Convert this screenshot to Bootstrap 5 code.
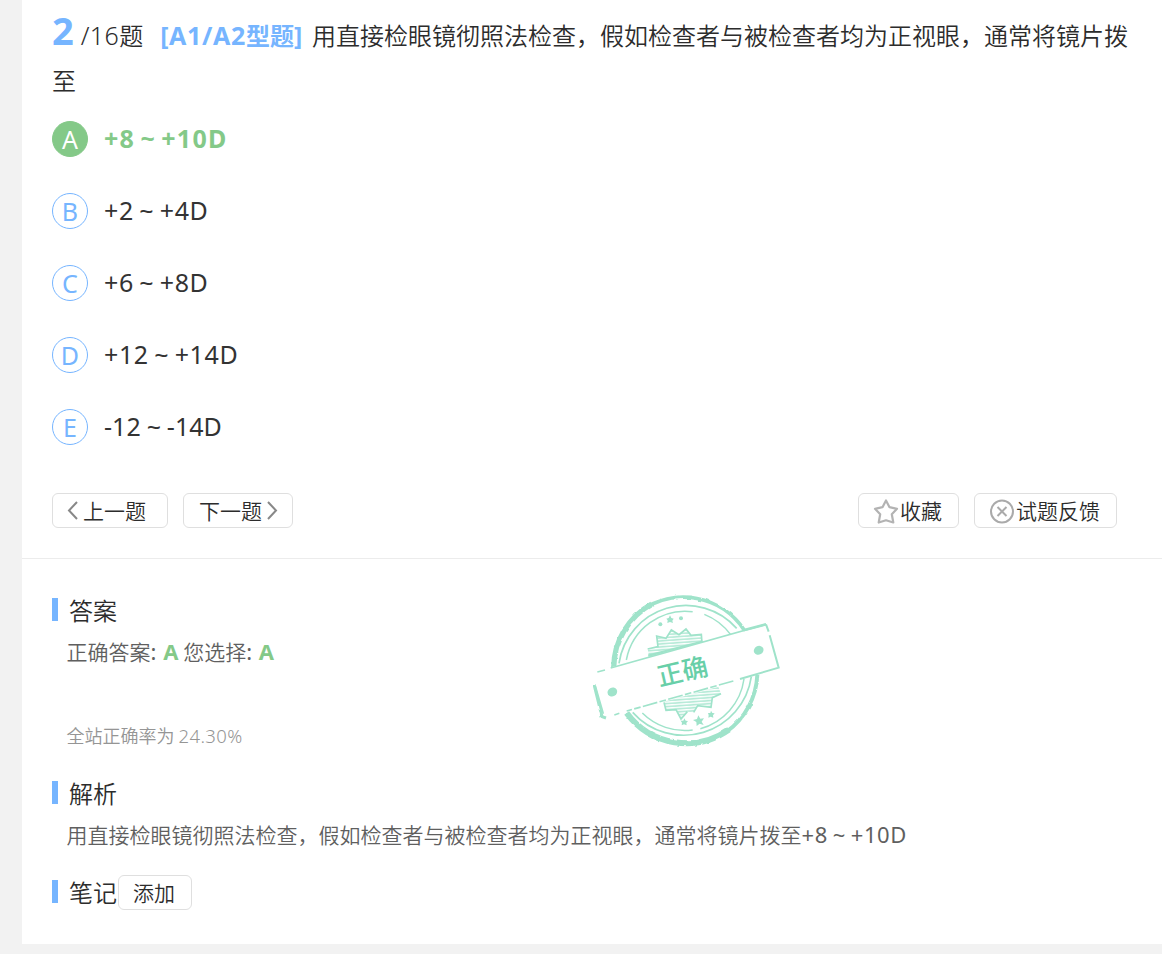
<!DOCTYPE html>
<html lang="zh-CN">
<head>
<meta charset="utf-8">
<meta name="viewport" content="width=device-width, initial-scale=1">
<title>题目解析</title>
<link href="https://cdn.jsdelivr.net/npm/bootstrap@5.3.0/dist/css/bootstrap.min.css" rel="stylesheet">
<style>
body{background:#f2f2f2;color:#2c2c2c;font-family:"Noto Sans CJK SC",sans-serif;font-weight:350}
.sheet{margin-left:22px;height:944px;background:#fff}
.latin{font-family:"Noto Sans",sans-serif;font-weight:350;font-size:25px;letter-spacing:.4px;line-height:1}
.question{height:121px;padding:13px 30px 0;font-size:24px;line-height:44.5px}
.number{font-family:"Noto Sans",sans-serif;font-size:38px;line-height:30px;color:#76b5ff;font-weight:700;margin-right:7px}
.kind{color:#76b5ff;font-weight:700;margin:0 9px 0 17px}
.kind .latin{font-weight:700;letter-spacing:.65px}
.choice{height:36px;margin-bottom:36px;padding-left:30px;font-family:"Noto Sans",sans-serif;font-weight:400;font-size:25px;letter-spacing:.6px;line-height:34px;color:#333}
.minus{letter-spacing:.05px}
.letter{width:36px;height:36px;border:1px solid #76b5ff;border-radius:50%;color:#76b5ff;margin-right:16px;letter-spacing:0;font-size:25px;line-height:34px;font-weight:400}
.tilde{display:inline-block;width:26px;text-align:center}
.correct{color:#84c988;font-weight:700;letter-spacing:1.3px}
.correct .letter{background:#84c988;border-color:#84c988;color:#fff}
.tool{height:35px;border:1px solid #dfdfdf;border-radius:6px;background:#fff;color:#2c2c2c;font-size:21px;font-weight:350;line-height:33px;padding:0 16px 0 14px;white-space:nowrap}
.tool svg{fill:none;flex:none}
.prev{padding-right:21px}
.next{padding-left:15px;padding-right:14px}
.tools{gap:15px;padding:12px 45px 30px 30px}
.results{border-top:1px solid #ececec;padding:33px 0 0 30px}
.heading{height:35px;font-size:24px;line-height:33px}
.heading::before{content:"";width:6px;height:23px;background:#76b5ff;margin-right:11px}
.note{margin-top:24px}
.note .tool{margin:2px 0 0 1px;padding:0 16px 0 14px}
.detail{padding-left:14.5px;font-size:21px;line-height:32px;height:32px;margin:8px 0 1px;color:#5f5f5f}
.detail .latin{font-size:22px;font-weight:400;letter-spacing:.55px}
.detail b{color:#84c988;font:700 22px/1 "Noto Sans",sans-serif}
.detail .tilde{width:23px}
.rate{padding-left:14.5px;font-size:18px;line-height:28px;height:28px;color:#959595;margin:54px 0 26px}
.rate .latin{font-size:18.5px;letter-spacing:.4px}
.stamp{left:558px;top:26px}
</style>
</head>
<body>
<main class="sheet">
  <div class="question"><span class="number">2</span><span class="latin">/16</span>题<span class="kind"><span class="latin">[A1/A2</span>型题<span class="latin">]</span></span>用直接检眼镜彻照法检查，假如检查者与被检查者均为正视眼，通常将镜片拨至</div>

  <div class="choice correct d-flex"><span class="letter d-flex justify-content-center">A</span><span>+8<span class="tilde">~</span>+10D</span></div>
  <div class="choice d-flex"><span class="letter d-flex justify-content-center">B</span><span>+2<span class="tilde">~</span>+4D</span></div>
  <div class="choice d-flex"><span class="letter d-flex justify-content-center">C</span><span>+6<span class="tilde">~</span>+8D</span></div>
  <div class="choice d-flex"><span class="letter d-flex justify-content-center">D</span><span>+12<span class="tilde">~</span>+14D</span></div>
  <div class="choice d-flex"><span class="letter d-flex justify-content-center">E</span><span class="minus">-12<span class="tilde">~</span>-14D</span></div>

  <div class="tools d-flex">
    <button class="tool prev d-flex align-items-center"><svg width="16" height="20" stroke="#888" stroke-width="2"><path d="M10 1 2 9.5 10 18"/></svg>上一题</button>
    <button class="tool next d-flex align-items-center">下一题<svg width="16" height="20" stroke="#888" stroke-width="2"><path d="M6 1 14 9.5 6 18"/></svg></button>
    <button class="tool d-flex align-items-center ms-auto"><svg width="27" height="26" stroke="#b3b3b3" stroke-width="2.2" stroke-linejoin="round"><path d="M13 2.5 16.5 9.2 24 10.8 18.8 16.3 20.3 24.5 13 22.3 5.7 24.5 7.2 16.3 2 10.8 9.5 9.2Z"/></svg>收藏</button>
    <button class="tool d-flex align-items-center"><svg width="27" height="26" stroke="#aaa" stroke-width="2"><circle cx="13" cy="13.5" r="11"/><path d="m8.5 9 9 9m0-9-9 9"/></svg>试题反馈</button>
  </div>

  <section class="results position-relative">
    <div class="heading d-flex align-items-center">答案</div>
    <div class="detail">正确答案<span class="latin">: </span><b>A</b> 您选择<span class="latin">: </span><b>A</b></div>
    <div class="rate">全站正确率为 <span class="latin">24.30%</span></div>
    <div class="heading d-flex align-items-center">解析</div>
    <div class="detail">用直接检眼镜彻照法检查，假如检查者与被检查者均为正视眼，通常将镜片拨至<span class="latin">+8<span class="tilde">~</span>+10D</span></div>
    <div class="heading note d-flex align-items-center">笔记<button class="tool">添加</button></div>

    <svg class="stamp position-absolute" width="210" height="170" viewBox="0 0 630 510" fill="none" stroke="#9fe3ca">
      <defs>
        <filter id="worn" x="-5%" y="-5%" width="110%" height="110%"><feTurbulence type="fractalNoise" baseFrequency=".04" numOctaves="2" seed="4"/><feDisplacementMap in="SourceGraphic" scale="8" xChannelSelector="R" yChannelSelector="G"/></filter>
        <pattern id="lines" width="9" height="9" patternUnits="userSpaceOnUse" patternTransform="rotate(-4)"><path d="M0 4h9" stroke-width="5" stroke="#b5ead7"/></pattern>
      </defs>
      <!-- worn outer rim -->
      <g filter="url(#worn)">
        <path d="M101 248A222 222 0 0 1 215 57" stroke-width="16"/>
        <path d="M185 75A220 220 0 0 1 492 134" stroke-width="11"/>
        <path d="M532 270A222 222 0 0 1 440 440" stroke-width="12"/>
        <path d="M447 434A222 222 0 0 1 140 384" stroke-width="18"/>
      </g>
      <path d="M117 235A203 203 0 0 1 470 130" stroke-width="5"/>
      <path d="M514 275A205 205 0 0 1 158 382" stroke-width="5"/>
      <!-- inner ring -->
      <path d="M139 225A180 180 0 0 1 338 80M373 88A180 180 0 0 1 452 149M492 282A180 180 0 0 1 361 431M338 435A180 180 0 0 1 187 384" stroke-width="4.5"/>
      <!-- toothed badge -->
      <path d="M203 192 234 185 230 153 258 160 274 135 297 149 318 132 333 151 364 148 366 174 207 214Z" fill="url(#lines)" stroke="none"/>
      <path d="M203 192 234 185 230 153 258 160 274 135 297 149 318 132 333 151 364 148 366 174" stroke-width="5"/>
      <path d="M205 213 368 171" stroke-width="10"/>
      <path d="M252 350 258 376 288 374 303 402 322 380 341 382 353 362 393 367 397 338 423 326 415 305Z" fill="url(#lines)" stroke="none"/>
      <path d="M252 352 258 376 288 374 303 402 322 380M341 382 353 362 393 367 397 338 423 326" stroke-width="5"/>
      <!-- stars -->
      <g fill="#9fe3ca" stroke="none">
        <path d="M270 91 274 99 281 101 277 107 279 114 270 111 262 114 263 106 259 101 266 99Z"/>
        <circle cx="241" cy="118" r="6"/><circle cx="303" cy="100" r="6"/>
        <path d="M355 391 361 401 372 400 365 410 371 420 359 416 350 423 349 411 339 405 351 402Z"/>
        <path d="M313 400 317 407 324 408 319 414 320 421 312 418 305 421 306 413 302 407 310 407Z"/>
        <path d="M393 377 397 384 404 385 399 391 400 398 392 395 385 398 386 390 384 384 391 384Z"/>
      </g>
      <!-- ribbon -->
      <path d="M40 262 558 118 597 248 70 400Z" fill="#fff" stroke="none"/>
      <path d="M52 261 75 255M92 249 558 118" stroke-width="5"/>
      <path d="M490 136 558 118" stroke-width="8"/>
      <path d="m558 118 8 22m3 11 27 97L480 282" stroke-width="6"/>
      <path d="M460 288 140 378" stroke-width="5" stroke-dasharray="45 7 20 7"/>
      <path d="m42 298 24 97 12 4" stroke-width="9" filter="url(#worn)"/>
      <path d="m46 303 24 83M103 390l15-5" stroke-width="5"/>
      <g fill="#9fe3ca" stroke="none"><ellipse cx="97" cy="321" rx="15" ry="13" transform="rotate(-30 97 321)"/><ellipse cx="536" cy="196" rx="15" ry="13" transform="rotate(-30 536 196)"/></g>
      <text transform="translate(307 259) rotate(-13)" y="28" text-anchor="middle" font-size="77" font-weight="500" font-family="Noto Sans CJK SC, sans-serif" fill="#68cfa8" stroke="none">正确</text>
    </svg>
  </section>
</main>
<script src="https://cdn.jsdelivr.net/npm/bootstrap@5.3.0/dist/js/bootstrap.bundle.min.js"></script>
</body>
</html>
